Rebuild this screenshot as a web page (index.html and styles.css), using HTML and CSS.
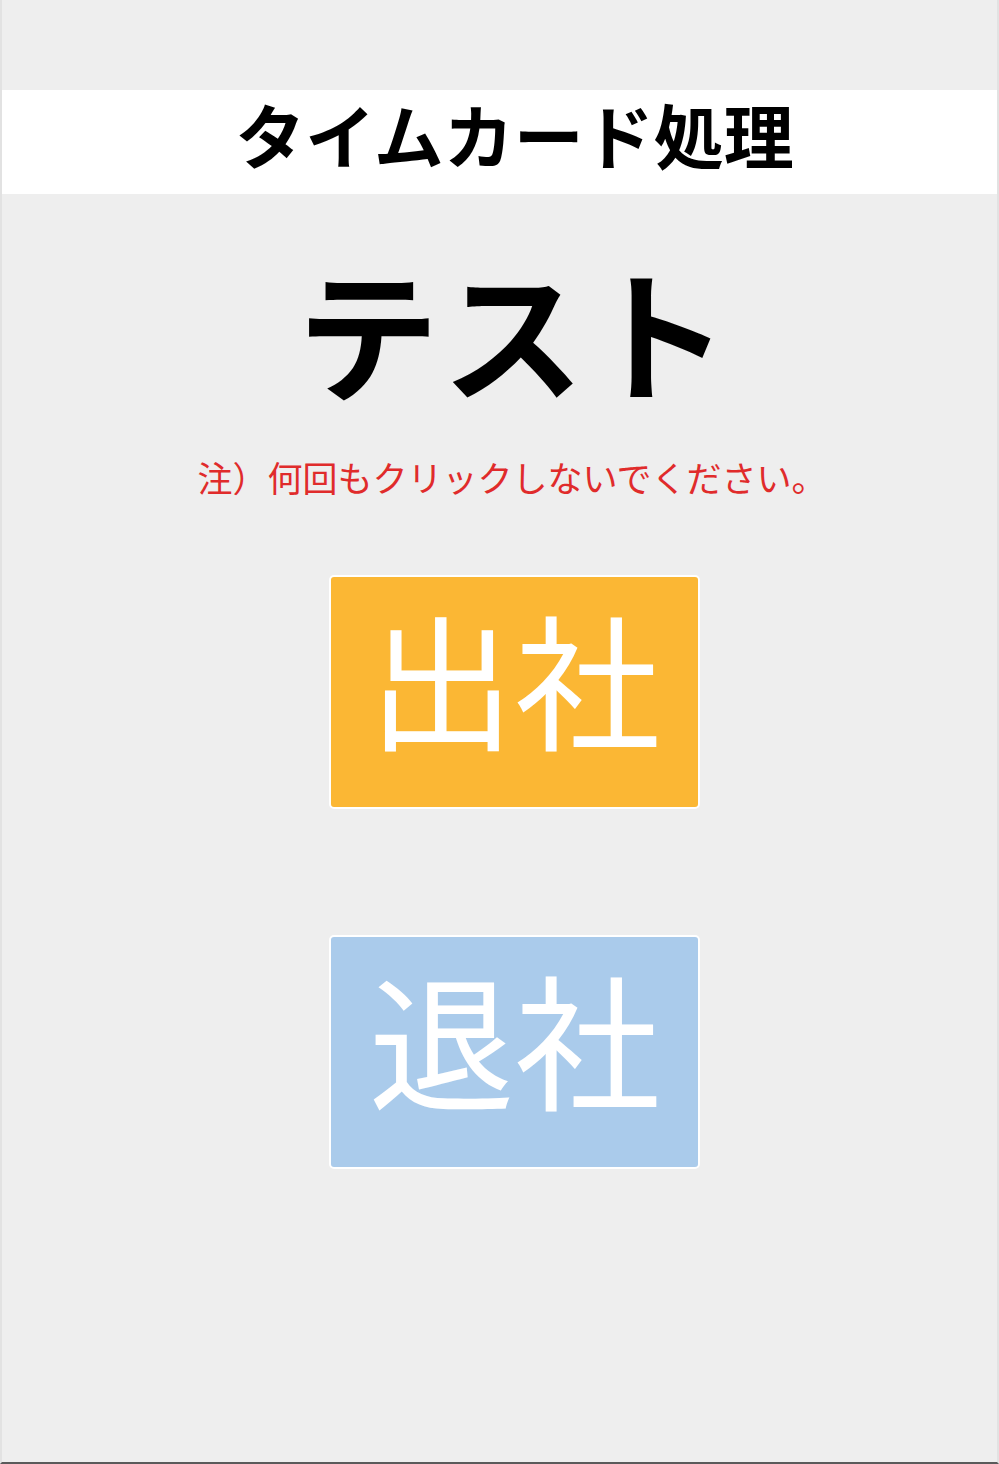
FILE: index.html
```html
<!DOCTYPE html>
<html lang="ja">
<head>
<meta charset="utf-8">
<title>タイムカード処理</title>
<link rel="stylesheet" href="styles.css">
</head>
<body>
<div class="page">
  <header class="bar">
    <h1 class="bar-title">タイムカード処理</h1>
  </header>
  <main class="main">
    <h2 class="name">テスト</h2>
    <p class="note">注）何回もクリックしないでください。</p>
    <button class="btn btn-in" type="button">出社</button>
    <button class="btn btn-out" type="button">退社</button>
  </main>
</div>
</body>
</html>
```
FILE: styles.css
```css
html, body {
  margin: 0;
  padding: 0;
  background: #eeeeee;
}
body {
  font-family: "Noto Sans CJK JP", "Noto Sans", sans-serif;
}
.page {
  box-sizing: border-box;
  height: 1464px;
  border-left: 2px solid #e2e2e2;
  border-right: 2px solid #e2e2e2;
  border-bottom: 2px solid #5a5a5a;
  padding-top: 90px;
}
.bar {
  box-sizing: border-box;
  background: #ffffff;
  height: 104px;
  display: flex;
  align-items: center;
  justify-content: center;
  padding: 0 0 16px 30px;
}
.bar-title {
  margin: 0;
  font-size: 70px;
  line-height: 1;
  font-weight: 700;
  color: #000;
}
.main {
  display: flex;
  flex-direction: column;
  align-items: center;
  padding-left: 26px;
}
.name {
  margin: 64px 0 0 4px;
  font-size: 142px;
  line-height: 1;
  font-weight: 700;
  letter-spacing: 3px;
  color: #000;
}
.note {
  margin: 59px 0 0 -1px;
  font-size: 35px;
  line-height: 1;
  color: #e02b2b;
  font-weight: 400;
}
.btn {
  box-sizing: border-box;
  width: 371px;
  height: 234px;
  margin-left: 4px;
  border: 2px solid #ffffff;
  border-radius: 5px;
  color: #ffffff;
  font-family: "Noto Sans CJK JP", sans-serif;
  font-size: 146px;
  font-weight: 400;
  line-height: 1;
  padding: 0 0 32px;
  display: flex;
  align-items: center;
  justify-content: center;
  cursor: pointer;
}
.btn-in {
  margin-top: 81px;
  background: #fbb734;
}
.btn-out {
  margin-top: 126px;
  background: #aacbeb;
}
```
